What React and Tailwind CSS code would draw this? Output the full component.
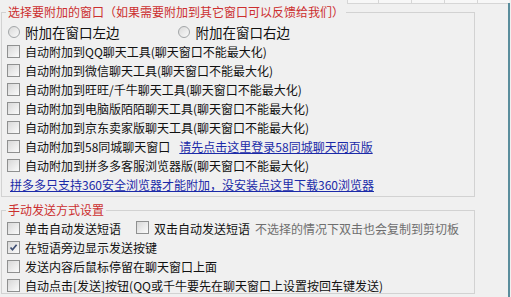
import React from 'react';

const font = { fontFamily: '"Noto Sans CJK SC", "Noto Sans", sans-serif' };

function Box({ checked }) {
  return (
    <span className="relative inline-block w-[13px] h-[13px] shrink-0 border border-[#8f9090] bg-gradient-to-br from-[#d8d8d8] to-[#fbfbfb]">
      {checked && (
        <svg viewBox="0 0 11 11" className="absolute inset-0 w-[11px] h-[11px]">
          <path d="M2.5 5.5 L4.5 7.8 L8.6 2.8" fill="none" stroke="#3d4d72" strokeWidth="1.7" />
        </svg>
      )}
    </span>
  );
}

function Radio() {
  return (
    <span className="inline-block w-[12px] h-[12px] shrink-0 rounded-full border border-[#a3a6a8] bg-gradient-to-br from-[#d9d9d9] to-[#fafafa]" />
  );
}

function Row({ children, checked }) {
  return (
    <div className="flex items-center h-[19px] pl-[5px]">
      <Box checked={checked} />
      <span className="ml-[5px] whitespace-nowrap text-[#111]">{children}</span>
    </div>
  );
}

const rows = [
  '自动附加到QQ聊天工具(聊天窗口不能最大化)',
  '自动附加到微信聊天工具(聊天窗口不能最大化)',
  '自动附加到旺旺/千牛聊天工具(聊天窗口不能最大化)',
  '自动附加到电脑版陌陌聊天工具(聊天窗口不能最大化)',
  '自动附加到京东卖家版聊天工具(聊天窗口不能最大化)',
];

export default function App() {
  return (
    <div className="relative w-[511px] h-[297px] overflow-hidden bg-[#f0f0f0] text-[12px] leading-[19px]" style={font}>
      {/* strip of the window behind */}
      <div className="absolute top-0 left-[347px] right-[2px] h-[4px] flex bg-[#f7f7f7] border-b border-[#d6d6d6]">
        <div className="w-[32px] border-l border-r border-[#d6d6d6]" />
        <div className="w-[33px] border-r border-[#d6d6d6]" />
        <div className="w-[33px] border-r border-[#d6d6d6]" />
        <div className="w-[33px] border-r border-[#d6d6d6]" />
      </div>
      <div className="absolute top-[3px] bottom-0 right-[1px] w-[2px] bg-[#5a8d9c]" />

      <div className="pl-[1px] pt-[4px]">
        <fieldset className="w-[474px] h-[193px] border border-[#d2d2d2]">
          <legend className="ml-[4px] px-[2px] leading-[16px] text-[#cc2f2f]">
            选择要附加的窗口（如果需要附加到其它窗口可以反馈给我们）
          </legend>
          <div className="mt-[2px] flex items-center h-[20px] pl-[6px] text-[13.5px] text-[#111]">
            <Radio />
            <span className="ml-[5px]">附加在窗口左边</span>
            <span className="ml-[58px]"><Radio /></span>
            <span className="ml-[6px]">附加在窗口右边</span>
          </div>
          {rows.map((r) => (
            <Row key={r}>{r}</Row>
          ))}
          <div className="flex items-center h-[19px] pl-[5px]">
            <Box />
            <span className="ml-[5px] whitespace-nowrap text-[#111]">自动附加到58同城聊天窗口</span>
            <a className="ml-[9px] whitespace-nowrap underline text-[#1b2aa8]">请先点击这里登录58同城聊天网页版</a>
          </div>
          <Row>自动附加到拼多多客服浏览器版(聊天窗口不能最大化)</Row>
          <div className="h-[19px] pl-[8px]">
            <a className="whitespace-nowrap underline text-[#1b2aa8]">
              拼多多只支持360安全浏览器才能附加，没安装点这里下载360浏览器
            </a>
          </div>
        </fieldset>

        <fieldset className="mt-[5px] w-[474px] h-[92px] border border-[#d2d2d2]">
          <legend className="ml-[4px] px-[2px] leading-[16px] text-[#cc2f2f]">手动发送方式设置</legend>
          <div className="mt-[1px] flex items-center h-[19px] pl-[5px] whitespace-nowrap">
            <Box />
            <span className="ml-[5px] text-[#111]">单击自动发送短语</span>
            <span className="ml-[15px]"><Box /></span>
            <span className="ml-[5px] text-[#111]">双击自动发送短语</span>
            <span className="ml-[5px] text-[#6e6e6e]">不选择的情况下双击也会复制到剪切板</span>
          </div>
          <Row checked>在短语旁边显示发送按键</Row>
          <Row>发送内容后鼠标停留在聊天窗口上面</Row>
          <Row>自动点击[发送]按钮(QQ或千牛要先在聊天窗口上设置按回车键发送)</Row>
        </fieldset>
      </div>
    </div>
  );
}
